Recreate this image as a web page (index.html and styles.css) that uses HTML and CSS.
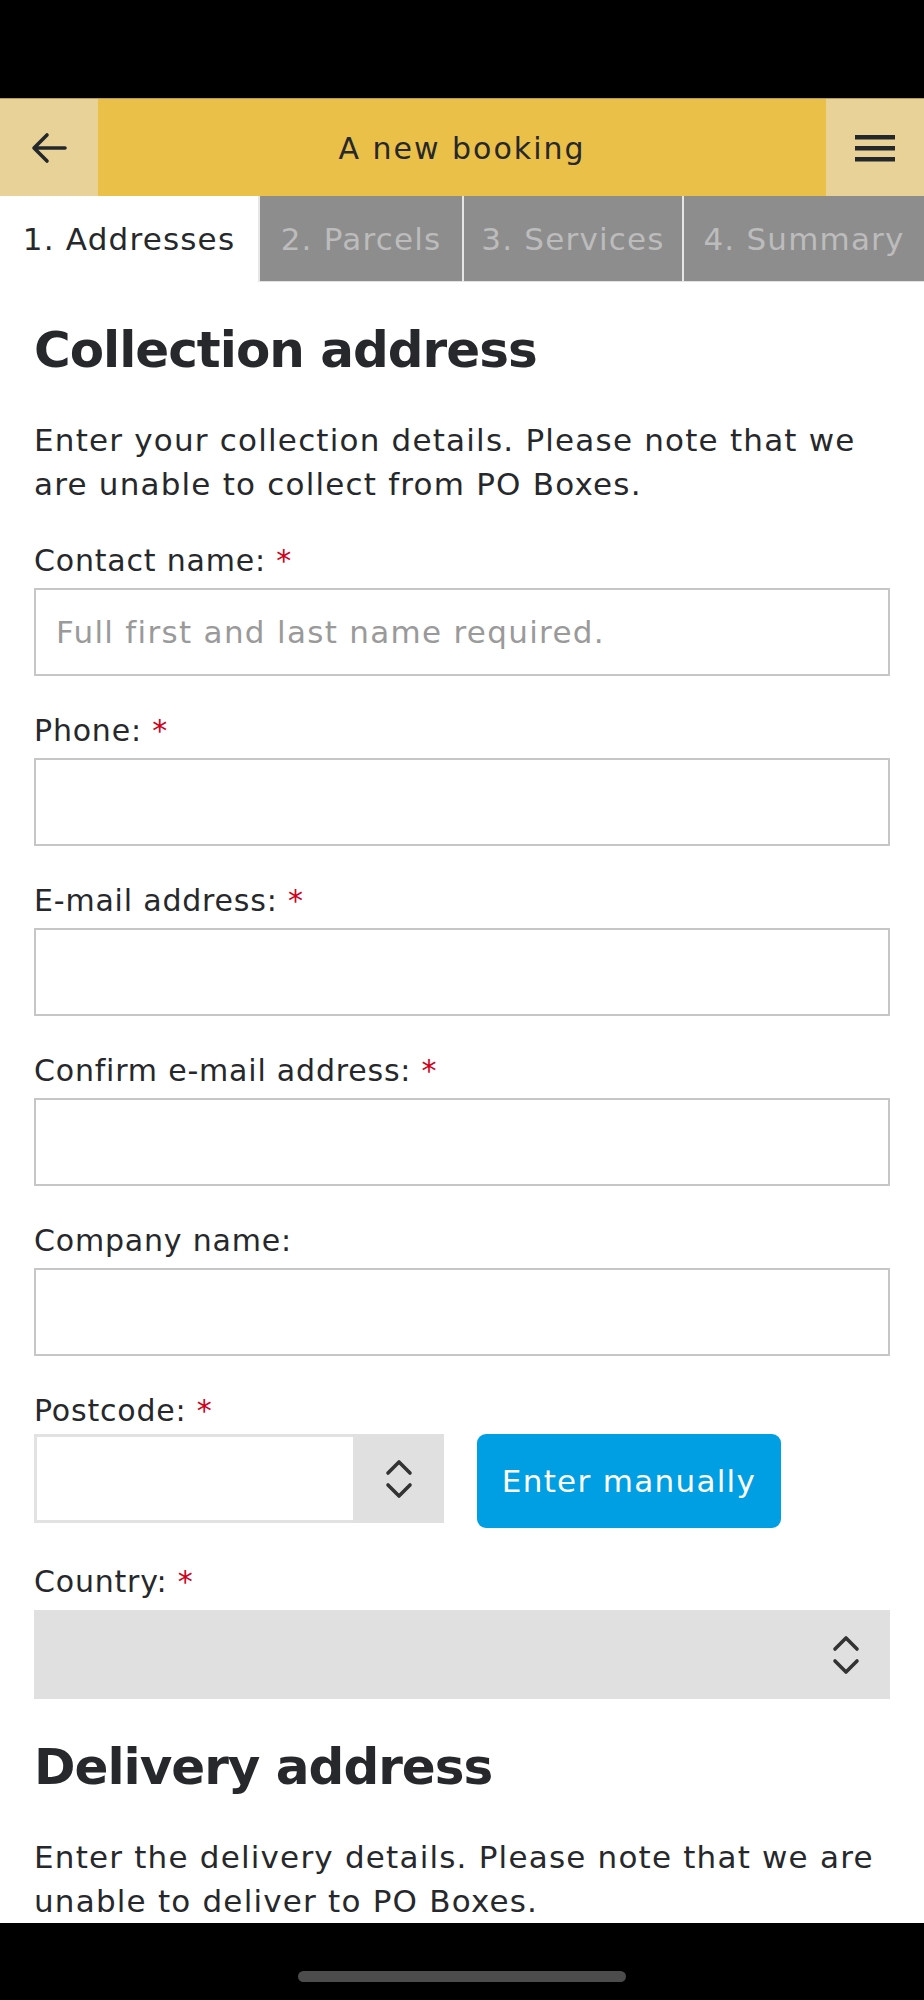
FILE: index.html
```html
<!DOCTYPE html>
<html lang="en">
<head>
<meta charset="utf-8">
<title>A new booking</title>
<link rel="stylesheet" href="styles.css">
</head>
<body>
<div class="screen">
  <div class="statusbar"></div>
  <header class="appbar">
    <button class="iconbtn" aria-label="Back">
      <svg width="40" height="40" viewBox="0 0 40 40"><path d="M36 20H6M18 7 5 20l13 13" fill="none" stroke="#25282b" stroke-width="3.6" stroke-linecap="round" stroke-linejoin="round"/></svg>
    </button>
    <div class="title">A new booking</div>
    <button class="iconbtn" aria-label="Menu">
      <svg width="40" height="30" viewBox="0 0 40 30"><rect x="0" y="2" width="40" height="4.5" fill="#25282b"/><rect x="0" y="13" width="40" height="4.5" fill="#25282b"/><rect x="0" y="24" width="40" height="4.5" fill="#25282b"/></svg>
    </button>
  </header>
  <nav class="tabs">
    <div class="tab active t1">1. Addresses</div>
    <div class="tab t2">2. Parcels</div>
    <div class="tab t3">3. Services</div>
    <div class="tab t4">4. Summary</div>
  </nav>
  <main class="content">
    <h1 class="heading">Collection address</h1>
    <p class="intro">Enter your collection details. Please note that we are unable to collect from PO Boxes.</p>

    <div class="field">
      <label class="label">Contact name: <span class="req">*</span></label>
      <div class="input placeholder">Full first and last name required.</div>
    </div>
    <div class="field">
      <label class="label">Phone: <span class="req">*</span></label>
      <div class="input"></div>
    </div>
    <div class="field">
      <label class="label">E-mail address: <span class="req">*</span></label>
      <div class="input"></div>
    </div>
    <div class="field">
      <label class="label">Confirm e-mail address: <span class="req">*</span></label>
      <div class="input"></div>
    </div>
    <div class="field">
      <label class="label">Company name:</label>
      <div class="input"></div>
    </div>
    <div class="field postfield">
      <label class="label">Postcode: <span class="req">*</span></label>
      <div class="postrow">
        <div class="postbox">
          <div class="postinput"></div>
          <div class="spin">
            <svg width="28" height="42" viewBox="0 0 28 42"><path d="M3 15 14 4l11 11M3 27l11 11 11-11" fill="none" stroke="#333" stroke-width="3.6" stroke-linecap="round" stroke-linejoin="round"/></svg>
          </div>
        </div>
        <button class="btn">Enter manually</button>
      </div>
    </div>
    <div class="field countryfield">
      <label class="label">Country: <span class="req">*</span></label>
      <div class="select">
        <svg width="28" height="42" viewBox="0 0 28 42"><path d="M3 15 14 4l11 11M3 27l11 11 11-11" fill="none" stroke="#333" stroke-width="3.6" stroke-linecap="round" stroke-linejoin="round"/></svg>
      </div>
    </div>

    <h1 class="heading">Delivery address</h1>
    <p class="intro">Enter the delivery details. Please note that we are unable to deliver to PO Boxes.</p>
  </main>
  <div class="navbar"><div class="homebar"></div></div>
</div>
</body>
</html>
```
FILE: styles.css
```css
* { box-sizing: border-box; }
html, body { margin: 0; padding: 0; }
body {
  font-family: "DejaVu Sans", "Liberation Sans", sans-serif;
  color: #26282b;
  background: #fff;
}
.screen {
  width: 924px;
  height: 2000px;
  display: flex;
  flex-direction: column;
  overflow: hidden;
}
.statusbar { height: 98px; background: #000; flex: none; }
.appbar {
  height: 98px;
  flex: none;
  display: flex;
  border-top: 1px solid #b39c5f;
}
.iconbtn {
  width: 98px;
  border: 0;
  padding: 0;
  background: #e8d298;
  display: flex;
  align-items: center;
  justify-content: center;
}
.title {
  flex: 1;
  background: #ebc049;
  display: flex;
  align-items: center;
  justify-content: center;
  font-size: 30px;
  letter-spacing: 2px;
  color: #26282b;
  padding-top: 2px;
}
.tabs {
  height: 86px;
  flex: none;
  display: flex;
  gap: 2px;
  background: #e6e6e6;
}
.tab {
  display: flex;
  align-items: center;
  justify-content: center;
  background: #8d8d8d;
  color: #bcbcbc;
  font-size: 31px;
  letter-spacing: 1.2px;
  white-space: nowrap;
  border-bottom: 1px solid #e2e2e2;
}
.tab.active { background: #fff; color: #26282b; border-bottom: 0; }
.t1 { width: 258px; }
.t2 { width: 202px; }
.t3 { width: 218px; }
.t4 { flex: 1; }
.content {
  flex: 1;
  overflow: hidden;
  padding: 0 34px;
}
.heading {
  margin: 37px 0 0;
  font-size: 50px;
  line-height: 62px;
  font-weight: 700;
  letter-spacing: -1px;
}
.intro {
  margin: 37px 0 35px;
  font-size: 31px;
  letter-spacing: 1.2px;
  line-height: 44px;
}
.field { margin-bottom: 35px; }
.label {
  display: block;
  font-size: 30px;
  letter-spacing: 0.8px;
  line-height: 40px;
  margin-bottom: 7px;
}
.req { color: #d0021b; }
.input {
  height: 88px;
  border: 2px solid #c6c6c6;
  background: #fff;
  display: flex;
  align-items: center;
  padding: 0 20px;
  font-size: 31px;
  letter-spacing: 1.3px;
}
.placeholder { color: #9a9a9a; }
.postfield .label { margin-bottom: 3px; }
.postfield { margin-bottom: 34px; }
.postrow {
  display: flex;
  align-items: flex-start;
  gap: 33px;
}
.postbox {
  width: 410px;
  height: 89px;
  display: flex;
  background: #e0e0e0;
}
.postinput {
  width: 319px;
  background: #fff;
  border: 3px solid #e2e2e2;
  border-right: 0;
}
.spin {
  flex: 1;
  display: flex;
  align-items: center;
  justify-content: center;
}
.btn {
  width: 304px;
  height: 94px;
  border: 0;
  border-radius: 9px;
  background: #009fe3;
  color: #fff;
  font-family: inherit;
  font-size: 31px;
  letter-spacing: 1.3px;
  padding: 0;
}
.countryfield .label { margin-bottom: 8px; }
.countryfield { margin-bottom: 0; }
.select {
  height: 89px;
  background: #e0e0e0;
  display: flex;
  align-items: center;
  justify-content: flex-end;
  padding-right: 30px;
}
.navbar {
  height: 77px;
  flex: none;
  background: #000;
  display: flex;
  justify-content: center;
  padding-top: 48px;
}
.homebar {
  width: 328px;
  height: 11px;
  border-radius: 6px;
  background: #4c4c4c;
}
```
